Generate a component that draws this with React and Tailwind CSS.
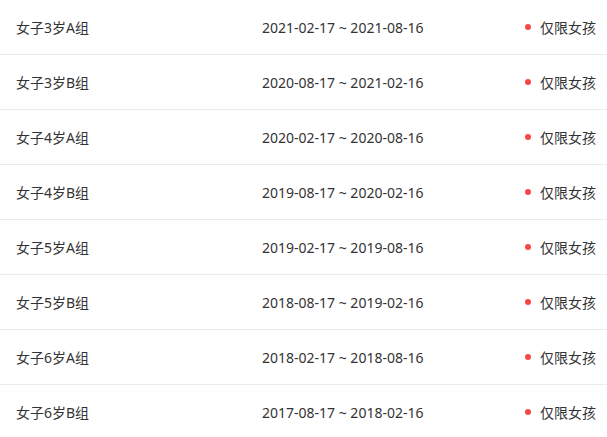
const rows = [
  { name: '女子3岁A组', range: '2021-02-17 ~ 2021-08-16' },
  { name: '女子3岁B组', range: '2020-08-17 ~ 2021-02-16' },
  { name: '女子4岁A组', range: '2020-02-17 ~ 2020-08-16' },
  { name: '女子4岁B组', range: '2019-08-17 ~ 2020-02-16' },
  { name: '女子5岁A组', range: '2019-02-17 ~ 2019-08-16' },
  { name: '女子5岁B组', range: '2018-08-17 ~ 2019-02-16' },
  { name: '女子6岁A组', range: '2018-02-17 ~ 2018-08-16' },
  { name: '女子6岁B组', range: '2017-08-17 ~ 2018-02-16' },
];

export default function App() {
  return (
    <div
      className="w-[607px] h-[437px] overflow-hidden bg-white text-[14px] text-[#333]"
      style={{ fontFamily: '"Noto Sans", "Noto Sans CJK SC", sans-serif' }}
    >
      {rows.map((r) => (
        <div key={r.name} className="flex items-center h-[55px] pl-4 pr-[11px] border-b border-[#ebebeb]">
          <div className="w-[246px]">{r.name}</div>
          <div>{r.range}</div>
          <div className="flex-1 flex items-center justify-end">
            <span className="w-[6px] h-[6px] rounded-full bg-[#f44848] mr-[9px]" />
            <span>仅限女孩</span>
          </div>
        </div>
      ))}
    </div>
  );
}
